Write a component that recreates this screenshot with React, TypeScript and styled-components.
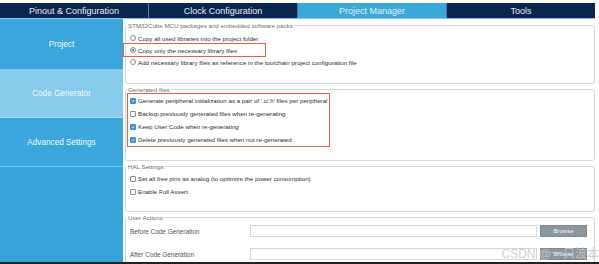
import React from 'react';
import styled, { createGlobalStyle } from 'styled-components';

const GlobalStyle = createGlobalStyle`
  html, body {
    margin: 0;
    padding: 0;
    background: #ffffff;
  }
  body {
    font-family: "Liberation Sans", Arial, sans-serif;
  }
`;

const Frame = styled.div`
  position: relative;
  width: 599px;
  height: 264px;
  overflow: hidden;
  display: flex;
  flex-direction: column;
  background: #ffffff;
`;

const TabBar = styled.div`
  display: flex;
  gap: 1px;
  width: 595px;
  height: 15px;
  margin-top: 3px;
  background: #60779a;
  border-bottom: 1px solid #7fc6ea;
`;

const Tab = styled.div<{ $active?: boolean }>`
  flex: 1;
  display: flex;
  align-items: center;
  justify-content: center;
  font-size: 9px;
  color: #e6ecf3;
  background: ${p => (p.$active ? '#39a9dc' : '#0a2550')};
`;

const Body = styled.div`
  display: flex;
  flex: 1;
  min-height: 0;
`;

const Sidebar = styled.div`
  width: 123px;
  flex-shrink: 0;
  display: flex;
  flex-direction: column;
  background: #36a3da;
`;

const NavItem = styled.div<{ $active?: boolean; $h: number }>`
  height: ${p => p.$h}px;
  display: flex;
  align-items: center;
  justify-content: center;
  font-size: 8.2px;
  color: #f4f9fd;
  background: ${p => (p.$active ? '#88cbed' : '#3ba6dc')};
  border-bottom: 1px solid rgba(255, 255, 255, 0.35);
`;

const Content = styled.div`
  flex: 1;
  min-width: 0;
  overflow: hidden;
  display: flex;
  flex-direction: column;
  gap: 2px;
  padding: 3px 4px 0 2px;
`;

const Group = styled.fieldset<{ $h: number; $pt: number }>`
  box-sizing: border-box;
  flex-shrink: 0;
  height: ${p => p.$h}px;
  margin: 0;
  min-width: 0;
  padding: ${p => p.$pt}px 4px 0 4px;
  border: 1px solid #d3d6da;
  border-radius: 3px;
  display: flex;
  flex-direction: column;
`;

const Legend = styled.legend`
  margin-left: -3px;
  padding: 0 1px;
  font-size: 6.2px;
  line-height: 7px;
  color: #6f6f6f;
`;

const Row = styled.div<{ $h: number }>`
  height: ${p => p.$h}px;
  display: flex;
  align-items: center;
  gap: 2px;
  font-size: 6.2px;
  color: #2e2e2e;
  white-space: nowrap;
`;

const Highlight = styled.div<{ $w?: number; $ml: number; $pl: number }>`
  align-self: flex-start;
  width: ${p => (p.$w ? `${p.$w}px` : 'auto')};
  margin: -1px 0 -1px ${p => p.$ml}px;
  padding: 0 2px 0 ${p => p.$pl}px;
  border: 1px solid #ef5b45;
`;

const Radio = styled.span<{ $on?: boolean }>`
  box-sizing: border-box;
  width: 6px;
  height: 6px;
  flex-shrink: 0;
  border-radius: 50%;
  border: 1px solid #8c8c8c;
  background: ${p => (p.$on ? 'radial-gradient(circle, #3b8fd6 45%, #d8ecfb 55%)' : '#ffffff')};
`;

const Box = styled.span<{ $on?: boolean }>`
  box-sizing: border-box;
  width: 6px;
  height: 6px;
  flex-shrink: 0;
  display: flex;
  align-items: center;
  justify-content: center;
  border: 1px solid ${p => (p.$on ? '#3b8fd6' : '#8c8c8c')};
  border-radius: 1px;
  background: ${p => (p.$on ? '#3b8fd6' : '#ffffff')};
`;

const FieldRow = styled.div<{ $mt: number }>`
  display: flex;
  align-items: center;
  height: 12px;
  margin-top: ${p => p.$mt}px;
`;

const FieldLabel = styled.span`
  width: 120px;
  flex-shrink: 0;
  font-size: 6.4px;
  color: #555555;
`;

const TextInput = styled.div`
  box-sizing: border-box;
  width: 287px;
  height: 12px;
  border: 1px solid #d3d6da;
  background: #ffffff;
`;

const BrowseButton = styled.div`
  box-sizing: border-box;
  width: 47px;
  height: 12px;
  margin-left: 3px;
  display: flex;
  align-items: center;
  justify-content: center;
  font-size: 6px;
  color: #f2f4f6;
  background: #8d979f;
  border: 1px solid #7f8890;
`;

const BottomBar = styled.div`
  height: 2px;
  flex-shrink: 0;
  background: #222222;
`;

const Watermark = styled.div`
  position: absolute;
  z-index: 2;
  right: 0;
  bottom: 3px;
  font-family: "Liberation Sans", "Noto Sans CJK SC", sans-serif;
  font-size: 12px;
  line-height: 13px;
  color: rgba(200, 200, 200, 0.85);
  white-space: nowrap;
`;

const Check = ({ on }: { on?: boolean }) => (
  <Box $on={on}>
    {on && (
      <svg width="4" height="4" viewBox="0 0 10 10">
        <path d="M1.5 5.2 L4 7.6 L8.6 2.4" fill="none" stroke="#fff" strokeWidth="2" />
      </svg>
    )}
  </Box>
);

const tabs = ['Pinout & Configuration', 'Clock Configuration', 'Project Manager', 'Tools'];

const App: React.FC = () => {
  return (
    <Frame>
      <GlobalStyle />
      <TabBar>
        {tabs.map(t => (
          <Tab key={t} $active={t === 'Project Manager'}>
            {t}
          </Tab>
        ))}
      </TabBar>
      <Body>
        <Sidebar>
          <NavItem $h={50}>Project</NavItem>
          <NavItem $h={47} $active>
            Code Generator
          </NavItem>
          <NavItem $h={48}>Advanced Settings</NavItem>
        </Sidebar>
        <Content>
          <Group $h={62} $pt={3}>
            <Legend>STM32Cube MCU packages and embedded software packs</Legend>
            <Row $h={12}>
              <Radio />
              Copy all used libraries into the project folder
            </Row>
            <Highlight $w={133} $ml={-7} $pl={6}>
              <Row $h={12}>
                <Radio $on />
                Copy only the necessary library files
              </Row>
            </Highlight>
            <Row $h={12}>
              <Radio />
              Add necessary library files as reference in the toolchain project configuration file
            </Row>
          </Group>

          <Group $h={75} $pt={1}>
            <Legend>Generated files</Legend>
            <Highlight $ml={-3} $pl={2}>
              <Row $h={13}>
                <Check on />
                Generate peripheral initialization as a pair of '.c/.h' files per peripheral
              </Row>
              <Row $h={13}>
                <Check />
                Backup previously generated files when re-generating
              </Row>
              <Row $h={13}>
                <Check on />
                Keep User Code when re-generating
              </Row>
              <Row $h={13}>
                <Check on />
                Delete previously generated files when not re-generated
              </Row>
            </Highlight>
          </Group>

          <Group $h={49} $pt={2}>
            <Legend>HAL Settings</Legend>
            <Row $h={13}>
              <Check />
              Set all free pins as analog (to optimize the power consumption)
            </Row>
            <Row $h={13}>
              <Check />
              Enable Full Assert
            </Row>
          </Group>

          <Group $h={70} $pt={0}>
            <Legend>User Actions</Legend>
            <FieldRow $mt={4}>
              <FieldLabel>Before Code Generation</FieldLabel>
              <TextInput />
              <BrowseButton>Browse</BrowseButton>
            </FieldRow>
            <FieldRow $mt={11}>
              <FieldLabel>After Code Generation</FieldLabel>
              <TextInput />
              <BrowseButton>Browse</BrowseButton>
            </FieldRow>
          </Group>
        </Content>
      </Body>
      <BottomBar />
      <Watermark>CSDN @一只波本</Watermark>
    </Frame>
  );
};

export default App;
